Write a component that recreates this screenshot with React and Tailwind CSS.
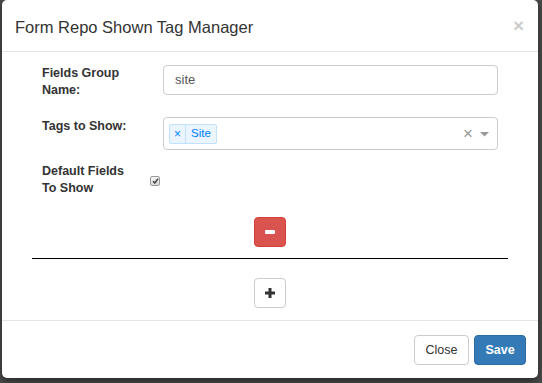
import React from "react";

export default function App() {
  const font = { fontFamily: '"Liberation Sans", Arial, Helvetica, sans-serif' };
  return (
    <div className="w-[542px] h-[383px] bg-[#4b4b4b] overflow-hidden pl-[2px]" style={font}>
      <div className="w-[536px] h-[378px] bg-white rounded-b-[5px] rounded-t-[5px] shadow-[0_3px_9px_rgba(0,0,0,0.5)] flex flex-col text-[#333]">
        {/* header */}
        <div className="h-[52px] border-b border-[#e5e5e5] flex items-start pt-[17px] pl-[13px] pr-[14px]">
          <h4 className="flex-1 text-[16.5px] leading-[20px] font-normal text-[#333]">
            Form Repo Shown Tag Manager
          </h4>
          <span className="text-[19px] leading-[17px] font-bold text-[#000] opacity-20">×</span>
        </div>

        {/* body */}
        <div className="flex-1 px-[30px] pt-[13px] pb-[11px] flex flex-col">
          {/* row 1 */}
          <div className="flex items-start pl-[10px]">
            <label className="w-[121px] pr-[20px] text-[12.5px] leading-[17px] font-bold">
              Fields Group Name:
            </label>
            <div className="w-[335px] h-[30px] border border-[#ccc] rounded-[4px] flex items-center px-[11px] text-[13px] text-[#555]">
              site
            </div>
          </div>

          {/* row 2 */}
          <div className="flex items-start pl-[10px] mt-[18px]">
            <label className="w-[121px] pt-[1px] text-[12.5px] leading-[17px] font-bold">
              Tags to Show:
            </label>
            <div className="w-[335px] h-[33px] border border-[#ccc] rounded-[4px] flex items-center pl-[5px] pr-[8px]">
              <div className="flex items-stretch h-[20px] border border-[#c2e0ff] bg-[#ebf5ff] rounded-[2px] text-[#007eff] text-[11.5px]">
                <span className="w-[16px] flex items-center justify-center border-r border-[#c2e0ff] text-[12px] leading-none">×</span>
                <span className="px-[5px] flex items-center">Site</span>
              </div>
              <div className="flex-1" />
              <span className="text-[#999] text-[17px] leading-none mr-[7px]">×</span>
              <svg width="9" height="5" viewBox="0 0 9 5" className="mt-[1px]">
                <path d="M0 0 L9 0 L4.5 4.5 Z" fill="#999" />
              </svg>
            </div>
          </div>

          {/* row 3 */}
          <div className="flex items-start pl-[10px] mt-[13px]">
            <label className="w-[108px] pr-[20px] text-[12.5px] leading-[17px] font-bold">
              Default Fields To Show
            </label>
            <span className="mt-[13px] w-[10px] h-[10px] rounded-[2px] border border-[#9a9a9a] bg-gradient-to-b from-[#f4f4f4] to-[#d9d9d9] flex items-center justify-center">
              <svg width="7" height="6" viewBox="0 0 7 6">
                <path d="M1 3.2 L2.8 5 L6 0.8" stroke="#444" strokeWidth="1.5" fill="none" />
              </svg>
            </span>
          </div>

          {/* minus */}
          <div className="flex justify-center mt-[20px]">
            <button className="w-[32px] h-[30px] rounded-[4px] bg-[#d9534f] border border-[#d43f3a] flex items-center justify-center">
              <span className="w-[10px] h-[4px] rounded-[1px] bg-white" />
            </button>
          </div>

          <div className="h-px bg-black mt-[11px]" />

          {/* plus */}
          <div className="flex justify-center mt-[19px]">
            <button className="w-[32px] h-[30px] rounded-[4px] bg-white border border-[#ccc] flex items-center justify-center">
              <svg width="10" height="10" viewBox="0 0 10 10">
                <path d="M5 0 V10 M0 5 H10" stroke="#333" strokeWidth="3" />
              </svg>
            </button>
          </div>
        </div>

        {/* footer */}
        <div className="border-t border-[#e5e5e5] pt-[14px] pb-[13px] pr-[12px] flex justify-end gap-[5px]">
          <button className="w-[55px] h-[30px] rounded-[4px] border border-[#ccc] bg-white text-[12.5px] text-[#333]">
            Close
          </button>
          <button className="w-[52px] h-[30px] rounded-[4px] border border-[#2e6da4] bg-[#337ab7] text-[12.5px] font-bold text-white">
            Save
          </button>
        </div>
      </div>
    </div>
  );
}
